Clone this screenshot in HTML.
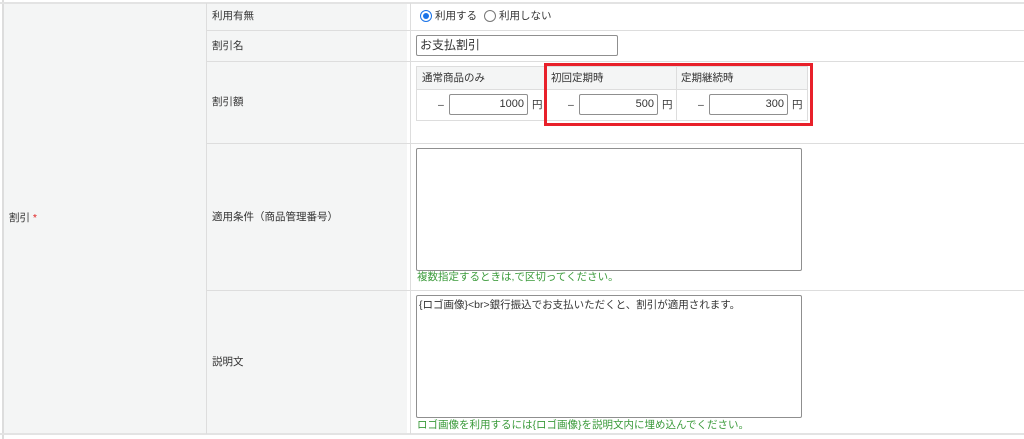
<!DOCTYPE html>
<html><head><meta charset="utf-8"><style>
body{margin:0;width:1024px;height:439px;background:#fff;position:relative;overflow:hidden;font-family:"Liberation Sans","Noto Sans CJK JP",sans-serif;font-size:10.5px;color:#333}
div{position:absolute;box-sizing:border-box}
.l{background:#f4f5f5}
.h{height:1px;background:#ddd}
.v{width:1px;background:#ddd}
.t{white-space:nowrap;line-height:12px}
.inp{border:1px solid #8f8f8f;border-radius:2px;background:#fff;text-align:right;padding-right:3px;line-height:18px;height:21px;font-size:11px}
.g{color:#3a9a3a}
</style></head><body>
<div class="l" style="left:3px;top:3px;width:404px;height:432px"></div>
<div class="v" style="left:2px;top:0;height:439px;width:2px;background:#ddd"></div>
<div class="h" style="left:0;top:2px;width:1024px;height:2px;background:#e3e3e3"></div>
<div class="h" style="left:0;top:433px;width:1024px;height:2px;background:#e3e3e3"></div>
<div class="v" style="left:206px;top:3px;height:431px"></div>
<div class="v" style="left:410px;top:3px;height:431px"></div>
<div class="h" style="left:206px;top:30px;width:818px"></div>
<div class="h" style="left:206px;top:61px;width:818px"></div>
<div class="h" style="left:206px;top:143px;width:818px"></div>
<div class="h" style="left:206px;top:290px;width:818px"></div>

<div class="t" style="left:9px;top:212px">割引 <span style="color:#e02020">*</span></div>
<div class="t" style="left:212px;top:10px">利用有無</div>
<div class="t" style="left:212px;top:40px">割引名</div>
<div class="t" style="left:212px;top:96px">割引額</div>
<div class="t" style="left:212px;top:211px">適用条件（商品管理番号）</div>
<div class="t" style="left:212px;top:356px">説明文</div>

<div style="left:420px;top:10px;width:12px;height:12px;border-radius:50%;border:1px solid #1a73e8;background:#fff"></div>
<div style="left:423px;top:13px;width:6px;height:6px;border-radius:50%;background:#1a73e8"></div>
<div class="t" style="left:435px;top:10px">利用する</div>
<div style="left:484px;top:10px;width:12px;height:12px;border-radius:50%;border:1px solid #777;background:#fff"></div>
<div class="t" style="left:499px;top:10px">利用しない</div>

<div class="inp" style="left:416px;top:35px;width:202px;text-align:left;padding-left:3px;font-size:12px">お支払割引</div>

<div style="left:416px;top:66px;width:392px;height:55px;border:1px solid #ddd;background:#fff"></div>
<div class="l" style="left:417px;top:67px;width:390px;height:22px"></div>
<div class="h" style="left:417px;top:89px;width:390px"></div>
<div class="v" style="left:546px;top:67px;height:53px"></div>
<div class="v" style="left:676px;top:67px;height:53px"></div>
<div class="t" style="left:422px;top:72px">通常商品のみ</div>
<div class="t" style="left:551px;top:72px">初回定期時</div>
<div class="t" style="left:681px;top:72px">定期継続時</div>
<div class="t" style="left:438px;top:99px">–</div>
<div class="inp" style="left:449px;top:94px;width:79px">1000</div>
<div class="t" style="left:532px;top:99px">円</div>
<div class="t" style="left:568px;top:99px">–</div>
<div class="inp" style="left:579px;top:94px;width:79px">500</div>
<div class="t" style="left:662px;top:99px">円</div>
<div class="t" style="left:698px;top:99px">–</div>
<div class="inp" style="left:709px;top:94px;width:79px">300</div>
<div class="t" style="left:792px;top:99px">円</div>
<div style="left:544px;top:63px;width:269px;height:63px;border:3px solid #e8202a"></div>

<div style="left:416px;top:148px;width:386px;height:123px;border:1px solid #8f8f8f;border-radius:2px"></div>
<div class="t g" style="left:417px;top:271px">複数指定するときは,で区切ってください。</div>
<div style="left:416px;top:295px;width:386px;height:123px;border:1px solid #8f8f8f;border-radius:2px"></div>
<div class="t" style="left:419px;top:299px">{ロゴ画像}&lt;br&gt;銀行振込でお支払いただくと、割引が適用されます。</div>
<div class="t g" style="left:417px;top:419px">ロゴ画像を利用するには{ロゴ画像}を説明文内に埋め込んでください。</div>
</body></html>
